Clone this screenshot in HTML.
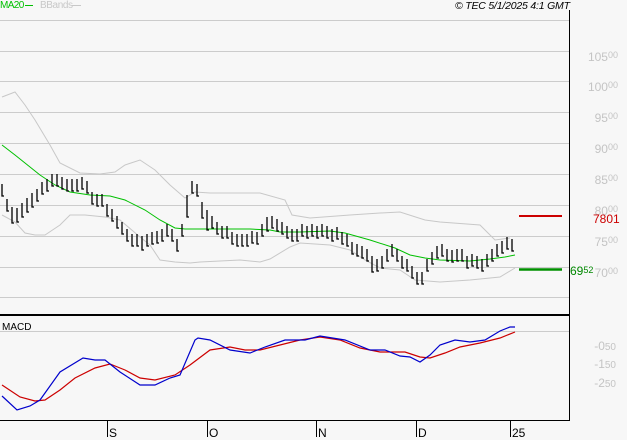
<!DOCTYPE html>
<html><head><meta charset="utf-8"><style>
html,body{margin:0;padding:0;background:#f7f7f7;}
body{width:627px;height:440px;overflow:hidden;position:relative;font-family:"Liberation Sans",sans-serif;}
svg{position:absolute;left:0;top:0;}
.l{position:absolute;right:9px;color:#c4c4c4;font-size:12px;line-height:12px;}
.l sup{font-size:9px;vertical-align:0;position:relative;top:-3px;}
.m{position:absolute;right:11px;color:#c4c4c4;font-size:12px;line-height:12px;}
</style></head><body>
<svg width="627" height="440" viewBox="0 0 627 440">
<g stroke="#cccccc" stroke-width="1" fill="none">
<line x1="0" y1="20.5" x2="569" y2="20.5"/>
<line x1="0" y1="51.5" x2="569" y2="51.5"/>
<line x1="0" y1="81.5" x2="569" y2="81.5"/>
<line x1="0" y1="112.5" x2="569" y2="112.5"/>
<line x1="0" y1="143.5" x2="569" y2="143.5"/>
<line x1="0" y1="174.5" x2="569" y2="174.5"/>
<line x1="0" y1="205.5" x2="569" y2="205.5"/>
<line x1="0" y1="236.5" x2="569" y2="236.5"/>
<line x1="0" y1="267.5" x2="569" y2="267.5"/>
<line x1="0" y1="297.5" x2="569" y2="297.5"/>
<line x1="0" y1="331.5" x2="569" y2="331.5"/>
</g>
<g stroke="#c8c8c8" fill="none">
<polyline points="2,97 15,92 25,105 35,120 50,145 60,163 80,173 100,174 115,172 125,165 140,160 155,170 170,185 185,198 195,192 210,193 260,193 285,200 292,215 310,218 350,215 380,213 400,212 425,220 440,222 480,225 495,240 510,238"/>
<polyline points="2,215 15,222 25,233 35,235 45,235 60,225 70,215 85,215 105,217 120,220 140,237 150,245 160,260 175,262 190,263 200,262 240,260 260,262 270,259 290,247 300,243 330,245 350,250 365,260 380,268 400,270 415,280 440,282 470,280 500,277 515,268"/>
</g>
<polyline fill="none" stroke="#00c000" stroke-width="1" points="2,145 15,155 40,175 55,185 70,192 90,195 110,196 125,200 145,210 160,220 175,228 185,229 215,229 250,229 270,230 280,232 300,232 330,231 345,233 370,240 395,248 410,255 425,258 440,260 470,261 490,259 505,257 515,255"/>
<path fill="none" stroke="#000" stroke-width="1.3" d="M2 184v12h2M7 199v12h2M12 207v16h2M17 208v14h2M22 203v14h2M27 198v14h2M32 193v14h2M37 189v12h2M42 182v12h2M47 179v12h2M52 174v12h2M57 174v12h2M62 177v12h2M67 179v12h2M72 179v12h2M77 179v12h2M82 177v12h2M87 181v12h2M92 192v12h2M97 194v12h2M102 194v12h2M107 204v12h2M112 209v12h2M117 216v12h2M122 222v12h2M127 229v12h2M132 234v12h2M137 234v12h2M142 236v14h2M147 234v12h2M152 232v12h2M157 231v12h2M162 229v12h2M167 224v12h2M172 229v12h2M177 239v12h2M182 224v12h2M187 195v22h2M192 181v12h2M197 184v12h2M202 202v16h2M207 210v20h2M212 216v12h2M217 222v12h2M222 226v12h2M227 226v12h2M232 232v12h2M237 234v12h2M242 234v12h2M247 234v12h2M252 231v12h2M257 232v12h2M262 224v12h2M267 217v14h2M272 216v12h2M277 219v12h2M282 222v12h2M287 226v12h2M292 229v12h2M297 229v12h2M302 224v12h2M307 226v12h2M312 224v12h2M317 226v12h2M322 224v12h2M327 226v12h2M332 229v12h2M337 227v12h2M342 232v12h2M347 234v12h2M352 242v12h2M357 244v12h2M362 246v12h2M367 249v12h2M372 256v16h2M377 259v12h2M382 256v12h2M387 249v12h2M392 244v12h2M397 249v12h2M402 256v12h2M407 259v12h2M412 266v12h2M417 272v12h2M422 272v12h2M427 259v12h2M432 252v12h2M437 246v12h2M442 244v12h2M447 249v12h2M452 250v12h2M457 249v12h2M462 249v12h2M467 256v12h2M472 254v12h2M477 256v12h2M482 259v12h2M487 254v12h2M492 249v12h2M497 244v12h2M502 241v12h2M507 237v12h2M512 239v12h2"/>
<line x1="519" y1="216" x2="562" y2="216" stroke="#cc0000" stroke-width="2"/>
<line x1="519" y1="269.5" x2="562" y2="269.5" stroke="#009000" stroke-width="2.5"/>
<polyline fill="none" stroke="#cc0000" stroke-width="1.2" points="2,385 20,397 35,401 45,400 60,390 75,378 95,368 110,364 125,370 140,378 155,380 175,375 190,365 210,350 230,347 245,350 260,350 280,345 300,340 320,337 340,340 360,348 380,352 395,352 405,352 420,357 430,358 445,353 460,347 480,343 500,338 515,332"/>
<polyline fill="none" stroke="#0000cc" stroke-width="1.2" points="2,396 17,410 30,406 40,400 60,372 83,358 95,360 105,360 120,372 140,385 155,385 170,378 180,375 195,340 198,338 210,340 230,350 250,353 265,347 285,340 305,340 320,336 345,340 370,350 385,350 400,356 410,357 420,362 430,355 440,345 455,340 470,342 485,340 500,331 510,327 515,327"/>
<line x1="0" y1="315" x2="569" y2="315" stroke="#000" stroke-width="2"/>
<line x1="569.5" y1="10" x2="569.5" y2="421" stroke="#000" stroke-width="1"/>
<line x1="0" y1="420.5" x2="570" y2="420.5" stroke="#000" stroke-width="1"/>
<g stroke="#000"><line x1="107.5" y1="420" x2="107.5" y2="437"/><line x1="207.5" y1="420" x2="207.5" y2="437"/><line x1="316.5" y1="420" x2="316.5" y2="437"/><line x1="416.5" y1="420" x2="416.5" y2="437"/><line x1="510.5" y1="420" x2="510.5" y2="437"/></g>
<line x1="25" y1="5.5" x2="33" y2="5.5" stroke="#00c000"/>
<line x1="72" y1="5.5" x2="81" y2="5.5" stroke="#c8c8c8"/>
</svg>
<div style="position:absolute;left:0;top:0;font-size:10px;color:#00c000;letter-spacing:-0.6px;">MA20</div>
<div style="position:absolute;left:40px;top:0;font-size:10px;color:#c8c8c8;letter-spacing:-0.4px;">BBands</div>
<div style="position:absolute;left:455px;top:0;font-size:10.5px;font-style:italic;color:#000;letter-spacing:-0.2px;">© TEC 5/1/2025 4:1 GMT</div>
<div class="l" style="top:51px">105<sup>00</sup></div>
<div class="l" style="top:81px">100<sup>00</sup></div>
<div class="l" style="top:112px">95<sup>00</sup></div>
<div class="l" style="top:143px">90<sup>00</sup></div>
<div class="l" style="top:174px">85<sup>00</sup></div>
<div class="l" style="top:205px">80<sup>00</sup></div>
<div class="l" style="top:236px">75<sup>00</sup></div>
<div class="l" style="top:267px">70<sup>00</sup></div>
<div style="position:absolute;left:593px;top:212px;font-size:12px;color:#cc0000;">7801</div>
<div style="position:absolute;left:570px;top:264px;font-size:12px;color:#008800;">69<span style="font-size:9px;position:relative;top:-2px">52</span></div>
<div style="position:absolute;left:2px;top:322px;font-size:10px;color:#000;">MACD</div>
<div class="m" style="top:340px">-0<span style="font-size:10px">50</span></div>
<div class="m" style="top:358px">-1<span style="font-size:10px">50</span></div>
<div class="m" style="top:377px">-2<span style="font-size:10px">50</span></div>
<div style="position:absolute;left:109px;top:426px;font-size:12px;">S</div>
<div style="position:absolute;left:209px;top:426px;font-size:12px;">O</div>
<div style="position:absolute;left:318px;top:426px;font-size:12px;">N</div>
<div style="position:absolute;left:418px;top:426px;font-size:12px;">D</div>
<div style="position:absolute;left:512px;top:426px;font-size:12px;">25</div>
</body></html>
